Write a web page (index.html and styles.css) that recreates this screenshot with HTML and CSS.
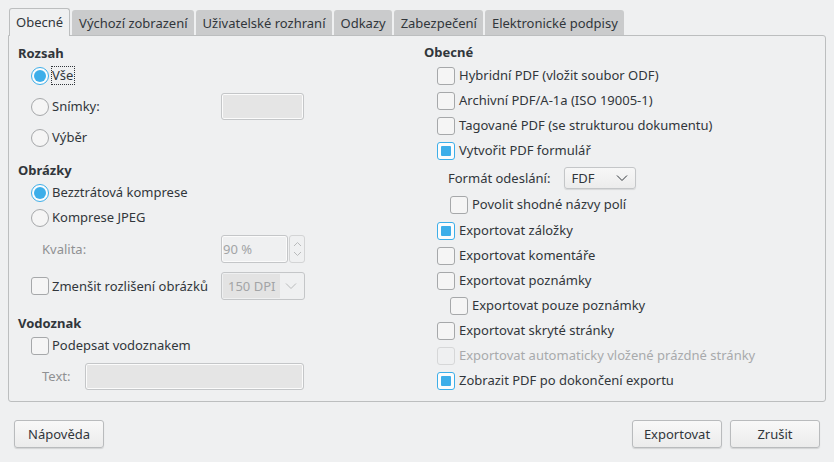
FILE: index.html
```html
<!DOCTYPE html>
<html lang="cs">

<head>
    <meta charset="UTF-8">
    <meta name="viewport" content="width=device-width, initial-scale=1.0">
    <title>Možnosti PDF</title>
    <link rel="stylesheet" href="styles.css">
</head>

<body>
    <div class="dialog">
        <div class="tabs">
            <span class="tab tab--active">Obecné</span>
            <span class="tab">Výchozí zobrazení</span>
            <span class="tab">Uživatelské rozhraní</span>
            <span class="tab">Odkazy</span>
            <span class="tab">Zabezpečení</span>
            <span class="tab">Elektronické podpisy</span>
        </div>

        <div class="panel">
            <div class="column column--left">
                <div class="heading">Rozsah</div>
                <div class="field field--range">
                    <span class="radio radio--on"></span><span class="label label--focus">Vše</span>
                </div>
                <div class="field field--range">
                    <span class="radio"></span><span class="label">Snímky:</span>
                    <span class="input input--slides"></span>
                </div>
                <div class="field field--range">
                    <span class="radio"></span><span class="label">Výběr</span>
                </div>

                <div class="heading heading--images">Obrázky</div>
                <div class="field field--first">
                    <span class="radio radio--on"></span><span class="label">Bezztrátová komprese</span>
                </div>
                <div class="field">
                    <span class="radio"></span><span class="label">Komprese JPEG</span>
                </div>
                <div class="field field--quality">
                    <span class="label label--muted">Kvalita:</span>
                    <span class="spin">
                        <span class="spin__value">90 %</span>
                        <span class="spin__arrows">
                            <svg width="9" height="20" viewBox="0 0 9 20"><path d="M1 7l3.5-3.5L8 7M1 13l3.5 3.5L8 13" fill="none" stroke="#b9bbbc" stroke-width="1"/></svg>
                        </span>
                    </span>
                </div>
                <div class="field field--dpi">
                    <span class="check"></span><span class="label">Zmenšit rozlišení obrázků</span>
                    <span class="combo combo--dpi">
                        <span class="combo__value">150 DPI</span>
                        <svg width="12" height="8" viewBox="0 0 12 8"><path d="M1 1.5l5 5 5-5" fill="none" stroke="#b9bbbc" stroke-width="1"/></svg>
                    </span>
                </div>

                <div class="heading heading--mark">Vodoznak</div>
                <div class="field field--first">
                    <span class="check"></span><span class="label">Podepsat vodoznakem</span>
                </div>
                <div class="field field--text">
                    <span class="label label--muted">Text:</span>
                    <span class="input input--text"></span>
                </div>
            </div>

            <div class="column column--right">
                <div class="heading">Obecné</div>
                <div class="option"><span class="check"></span><span class="label">Hybridní PDF (vložit soubor ODF)</span></div>
                <div class="option"><span class="check"></span><span class="label">Archivní PDF/A-1a (ISO 19005-1)</span></div>
                <div class="option"><span class="check"></span><span class="label">Tagované PDF (se strukturou dokumentu)</span></div>
                <div class="option"><span class="check check--on"></span><span class="label">Vytvořit PDF formulář</span></div>
                <div class="option option--format">
                    <span class="label">Formát odeslání:</span>
                    <span class="combo combo--format">
                        <span class="combo__value">FDF</span>
                        <svg width="12" height="8" viewBox="0 0 12 8"><path d="M1 1.5l5 5 5-5" fill="none" stroke="#31363b" stroke-width="1"/></svg>
                    </span>
                </div>
                <div class="option option--sub"><span class="check"></span><span class="label">Povolit shodné názvy polí</span></div>
                <div class="option option--gap"><span class="check check--on"></span><span class="label">Exportovat záložky</span></div>
                <div class="option"><span class="check"></span><span class="label">Exportovat komentáře</span></div>
                <div class="option"><span class="check"></span><span class="label">Exportovat poznámky</span></div>
                <div class="option option--sub"><span class="check"></span><span class="label">Exportovat pouze poznámky</span></div>
                <div class="option"><span class="check"></span><span class="label">Exportovat skryté stránky</span></div>
                <div class="option option--disabled"><span class="check"></span><span class="label">Exportovat automaticky vložené prázdné stránky</span></div>
                <div class="option"><span class="check check--on"></span><span class="label">Zobrazit PDF po dokončení exportu</span></div>
            </div>
        </div>

        <div class="buttons">
            <button class="button">Nápověda</button>
            <span class="buttons__spacer"></span>
            <button class="button">Exportovat</button>
            <button class="button">Zrušit</button>
        </div>
    </div>
</body>

</html>
```

FILE: styles.css
```css
body {
    margin: 0;
    background-color: #eff0f1;
    color: #31363b;
    font-family: 'Noto Sans', 'DejaVu Sans', sans-serif;
    font-size: 13px;
}

.dialog {
    width: 834px;
    height: 462px;
    box-sizing: border-box;
    padding: 8px 8px 0 8px;
}

/* tab bar */

.tabs {
    display: flex;
    align-items: flex-end;
    gap: 2px;
    height: 27px;
    padding-left: 1px;
}

.tab {
    display: flex;
    align-items: center;
    height: 25px;
    padding: 0 6px 0 7px;
    box-sizing: border-box;
    background-color: #cacbcc;
    border-radius: 3px 3px 0 0;
    white-space: nowrap;
}

.tab--active {
    height: 28px;
    margin-bottom: -1px;
    background-color: #eff0f1;
    border: 1px solid #bcbebf;
    border-bottom: none;
    padding: 0 6px 1px 6px;
    position: relative;
    z-index: 1;
}

/* main panel */

.panel {
    display: grid;
    grid-template-columns: 406px 1fr;
    height: 367px;
    box-sizing: border-box;
    border: 1px solid #bcbebf;
    border-radius: 0 3px 3px 3px;
    padding: 7px 9px 0 9px;
}

.column {
    display: flex;
    flex-direction: column;
}

.column--left {
    width: 287px;
}

.heading {
    height: 18px;
    line-height: 18px;
    font-weight: bold;
}

.column--left .heading {
    margin-top: 1px;
}

.field {
    display: flex;
    align-items: center;
    height: 25px;
    padding-left: 13px;
}

.field--range {
    height: 27px;
    margin-bottom: 4px;
}

.field--first {
    margin-top: 1px;
}

.column--left .heading--images {
    margin-top: 6px;
}

.field--quality {
    height: 28px;
    margin-top: 5px;
    padding-left: 24px;
}

.field--dpi {
    height: 28px;
    margin-top: 9px;
}

.column--left .heading--mark {
    margin-top: 14px;
}

.field--text {
    height: 27px;
    margin-top: 5px;
    padding-left: 24px;
}

.label {
    white-space: nowrap;
    line-height: 17px;
}

.label--muted {
    color: #8f9193;
}

.label--focus {
    outline: 1px dotted #31363b;
    padding: 0 1px 0 0;
}

/* radio buttons and check boxes */

.radio,
.check {
    flex: none;
    width: 18px;
    height: 18px;
    box-sizing: border-box;
    border: 1px solid #a6a8aa;
    background-color: #f5f5f5;
    margin-right: 3px;
    position: relative;
}

.radio {
    border-radius: 50%;
}

.check {
    border-radius: 3px;
}

.radio--on,
.check--on {
    border-color: #3daee9;
    background-color: #fcfcfc;
}

.radio--on::after,
.check--on::after {
    content: '';
    position: absolute;
    left: 3px;
    top: 3px;
    width: 10px;
    height: 10px;
    background-color: #3daee9;
}

.radio--on::after {
    left: 2px;
    top: 2px;
    width: 12px;
    height: 12px;
    border-radius: 50%;
}

.check--on::after {
    border-radius: 1px;
}

/* inputs */

.input {
    display: block;
    height: 27px;
    box-sizing: border-box;
    border: 1px solid #c4c6c8;
    border-radius: 3px;
    background-color: #e5e5e5;
    box-shadow: inset 0 0 0 1px #fbfbfb;
    margin-left: auto;
    margin-right: 1px;
}

.input--slides {
    width: 83px;
}

.input--text {
    width: 219px;
}

.spin {
    display: flex;
    width: 84px;
    height: 28px;
    margin-left: auto;
}

.spin__value {
    display: flex;
    align-items: center;
    width: 67px;
    box-sizing: border-box;
    border: 1px solid #c4c6c8;
    border-radius: 3px;
    background-color: #eff0f1;
    box-shadow: inset 0 0 0 1px #fbfbfb;
    padding-left: 1px;
    color: #a2a4a6;
}

.spin__arrows {
    display: flex;
    align-items: center;
    justify-content: center;
    width: 16px;
    margin-left: 1px;
    box-sizing: border-box;
    border: 1px solid #d3d4d5;
    border-radius: 3px;
}

.combo {
    display: flex;
    align-items: center;
    box-sizing: border-box;
    border: 1px solid #c4c6c8;
    border-radius: 3px;
}

.combo--dpi {
    width: 84px;
    height: 28px;
    margin-left: auto;
    padding: 1px;
    justify-content: space-between;
}

.combo--dpi .combo__value {
    display: flex;
    align-items: center;
    height: 100%;
    width: 57px;
    padding-left: 5px;
    box-sizing: border-box;
    background-color: #e3e3e3;
    color: #a2a4a6;
}

.combo--dpi svg {
    margin-right: 6px;
}

.combo--format {
    width: 72px;
    height: 22px;
    margin-left: 14px;
    padding: 0 7px 0 6px;
    justify-content: space-between;
    background: linear-gradient(#f7f7f7, #ececec);
    box-shadow: 0 1px 1px rgba(0, 0, 0, 0.1);
}

/* right column options */

.option {
    display: flex;
    align-items: center;
    height: 25px;
    padding-left: 13px;
}

.column--right .heading {
    margin-top: 0;
    margin-bottom: 2px;
}

.option .check {
    margin-right: 4px;
}

.option--format {
    height: 28px;
    padding-left: 24px;
    margin-top: 1px;
}

.option--sub {
    padding-left: 26px;
}

.option--gap {
    margin-top: 1px;
}

.option--disabled .label {
    color: #a8aaac;
}

.option--disabled .check {
    border-color: #d6d7d8;
    background-color: #eff0f1;
}

/* bottom buttons */

.buttons {
    display: flex;
    align-items: center;
    gap: 8px;
    padding: 18px 6px 0 6px;
}

.buttons__spacer {
    flex: 1;
}

.button {
    width: 90px;
    height: 28px;
    box-sizing: border-box;
    border: 1px solid #b9bbbd;
    border-radius: 3px;
    background: linear-gradient(#f8f8f8, #ebebeb);
    box-shadow: 0 1px 1px rgba(0, 0, 0, 0.12);
    color: #31363b;
    font-family: 'Noto Sans', 'DejaVu Sans', sans-serif;
    font-size: 13px;
}
```
